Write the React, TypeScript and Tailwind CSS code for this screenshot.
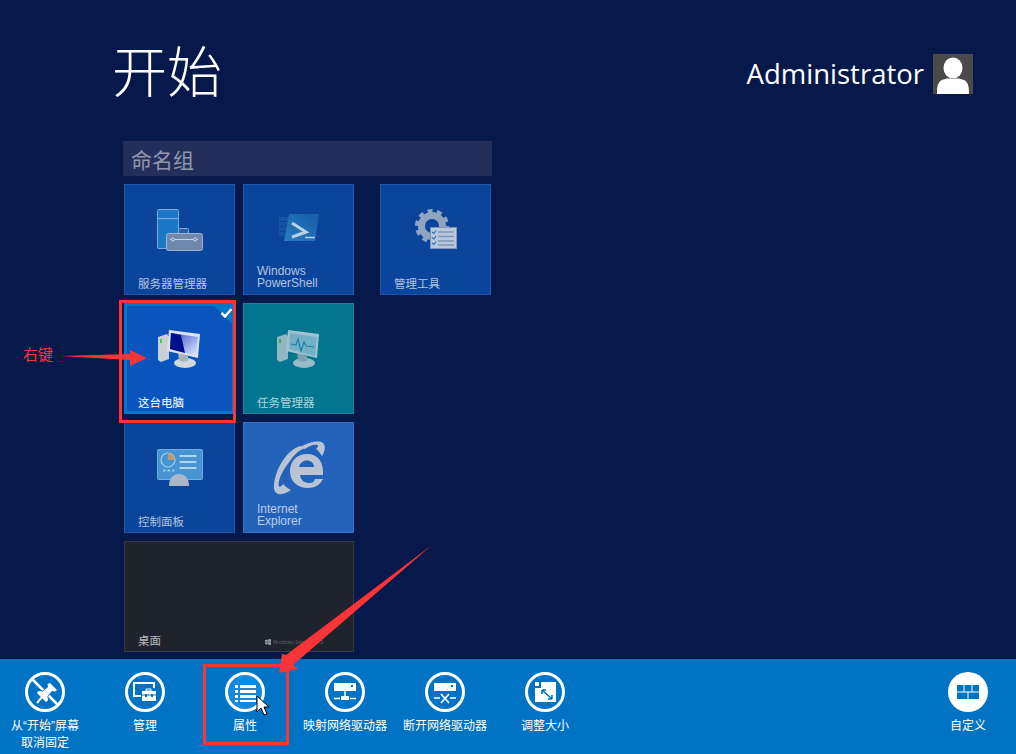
const cjk = "font-['Noto_Sans_CJK_SC','Noto_Sans',sans-serif]"

const Tile = ({ label, bg, children, wide, dim = true }: { label: React.ReactNode; bg: string; children?: React.ReactNode; wide?: boolean; dim?: boolean }) => {
  return (
    <div className={`relative flex h-[111px] flex-col items-center border border-white/10 ${wide ? 'w-[230px]' : 'w-[111px]'} ${bg}`}>
      <div className="flex flex-1 items-center justify-center pb-[20px]">{children}</div>
      <div className={`absolute bottom-[5px] left-[13px] text-[11.5px] leading-[12px] ${dim ? 'text-white/70' : 'text-white'}`}>{label}</div>
    </div>
  )
}

const TwoLines = ({ top, bottom }: { top: string; bottom: string }) => (
  <div className="font-['Liberation_Sans',sans-serif] text-[12px]">
    <div className="h-[12px] leading-[12px]">{top}</div>
    <div className="h-[12px] leading-[12px]">{bottom}</div>
  </div>
)

const ServerIcon = () => (
  <svg width="46" height="42" viewBox="0 0 46 42">
    <rect x="0.5" y="0.5" width="21" height="39" rx="1" fill="#1b78c8" stroke="#7fa8d6" />
    <path d="M1 9.5h20" stroke="#7fa8d6" />
    <rect x="21.5" y="19.5" width="10" height="6" rx="1" fill="#2a5ea8" stroke="#8fa8c8" />
    <rect x="9.5" y="24.5" width="36" height="17" rx="2" fill="#6f88ab" stroke="#9db2cf" />
    <path d="M13 30.5h28" stroke="#c6d3e4" />
    <circle cx="16" cy="30.5" r="1.5" fill="#6f88ab" stroke="#c6d3e4" />
    <circle cx="38" cy="30.5" r="1.5" fill="#6f88ab" stroke="#c6d3e4" />
  </svg>
)

const PowerShellIcon = () => (
  <svg width="40" height="30" viewBox="0 0 40 30" className="-mt-[3px]">
    <defs>
      <linearGradient id="ps" x1="0" y1="1" x2="1" y2="0">
        <stop offset="0" stopColor="#2a7cc0" />
        <stop offset="1" stopColor="#155ea8" />
      </linearGradient>
    </defs>
    <path d="M0 6h10M0 11h8M0 16h8M0 21h6" stroke="#3b7cc0" strokeWidth="4" opacity="0.28" />
    <path d="M10 1h30l-4 27H5z" fill="url(#ps)" />
    <path d="M13 10l14 9-14 5" fill="none" stroke="#b6d2e8" strokeWidth="3" />
    <path d="M26 24.5h10" stroke="#b6d2e8" strokeWidth="1.5" />
  </svg>
)

const GearIcon = () => (
  <svg width="42" height="41" viewBox="0 0 42 41">
    <circle cx="17" cy="17" r="10.5" fill="none" stroke="#8ea4bf" strokeWidth="7" />
    <circle cx="17" cy="17" r="15" fill="none" stroke="#8ea4bf" strokeWidth="4" strokeDasharray="5 4.4" />
    <rect x="15.5" y="18.5" width="26" height="21" fill="#b9c8da" stroke="#7d93b0" />
    <path d="M23 23h16M23 27.5h16M23 32h16M23 36h16" stroke="#7f97b8" strokeWidth="1.5" />
    <path d="M17 23l2 1.5 2-3M17 28.5l2 1.5 2-3M17 34l2 1.5 2-3" stroke="#2e70c4" strokeWidth="1.2" fill="none" />
  </svg>
)

const MonitorIcon = ({ pulse, dim }: { pulse?: boolean; dim?: boolean }) => (
  <svg width="44" height="40" viewBox="0 0 44 40" opacity={dim ? 0.72 : 1}>
    <defs>
      <linearGradient id="scr" x1="0" y1="0" x2="1" y2="1">
        <stop offset="0" stopColor="#2b48c8" />
        <stop offset="1" stopColor="#e8eeff" />
      </linearGradient>
    </defs>
    <path d="M0 8l9-3 2 3v22l-8 3-3-2z" fill="#c8d0d6" />
    <rect x="2" y="10" width="2" height="4" fill="#52c452" />
    <ellipse cx="27" cy="34" rx="11" ry="5" fill="#d2d8dc" />
    <path d="M20 24l10 3v5c-3 1-7 1-9-1z" fill="#aab4bb" />
    <path d="M11 1l31 4-2 24-31-7z" fill="#dde3e8" />
    <path d="M13 4l27 4-2 19-26-7z" fill={pulse ? '#9cc8dc' : 'url(#scr)'} />
    {pulse ? (
      <path d="M14 15l5 1 2-6 3 12 3-9 2 4 8 1" stroke="#2e7fb0" strokeWidth="1.2" fill="none" />
    ) : (
      <path d="M13 4l10 2 4 18-15-4z" fill="#00108a" />
    )}
  </svg>
)

const PanelIcon = () => (
  <svg width="46" height="38" viewBox="0 0 46 38">
    <rect x="0.5" y="0.5" width="45" height="30" rx="1" fill="#4794d4" stroke="#6fb0e0" />
    <circle cx="11" cy="11" r="7" fill="none" stroke="#a4cfec" strokeWidth="1.2" />
    <path d="M11 4a7 7 0 0 1 7 7h-7z" fill="#c29a68" />
    <rect x="22" y="5.5" width="18" height="3" rx="1" fill="#a8d8f2" stroke="#2f6fae" strokeWidth="0.5" />
    <rect x="22" y="11.5" width="18" height="3" rx="1" fill="#a8d8f2" stroke="#2f6fae" strokeWidth="0.5" />
    <rect x="22" y="17.5" width="18" height="3" rx="1" fill="#a8d8f2" stroke="#2f6fae" strokeWidth="0.5" />
    <path d="M6 21.5h2.5M10.5 21.5h2.5M15 21.5h2.5" stroke="#8fd0f0" strokeWidth="2" />
    <path d="M12 37c0-7 3-12 10-12s10 5 10 12z" fill="#a9b8c9" />
  </svg>
)

const IeIcon = () => (
  <svg width="52" height="54" viewBox="0 0 52 54">
    <path
      fill="#b9c3d2"
      fillRule="evenodd"
      d="M34 13C45 13 51 21 50 34H27C28 40 32 42 36 42C39 42 41 41 42 38H50C47 44 42 47 35 47C24 47 17 40 17 30C17 20 24 13 34 13ZM26 26H41C41 22 38 19.5 34 19.5C30 19.5 27 22 26 26Z"
    />
    <path fill="#b9c3d2" d="M27 5C15 9 4 24 1 43C0 50 3 54 9 53C12 52.5 15 51 18 49C14 47 12 45 10 43C8 46 6 47 5.5 44C6 36 10 29 17 20C20 15 25 10 32 7Z" />
    <path fill="#b9c3d2" d="M27 6C36 1 46 -1 50 2C53 5 52 10 49 15C47 12 45 9 43 8C45 6 46 4 44 4C41 3 36 5 32 8Z" />
  </svg>
)

const Glyph = ({ children }: { children: React.ReactNode }) => (
  <svg width="24" height="24" viewBox="0 0 24 24" className="text-white">
    {children}
  </svg>
)

const BarItem = ({ label, icon, filled, hovered }: { label: React.ReactNode; icon: React.ReactNode; filled?: boolean; hovered?: boolean }) => {
  return (
    <div className="flex w-[100px] flex-col items-center pt-[13px]">
      <div className={`flex h-[40px] w-[40px] items-center justify-center rounded-full border-white ${filled ? 'bg-white' : 'border-[3px]'} ${hovered ? 'bg-[#1488dc]' : ''}`}>
        {icon}
      </div>
      <div className="mt-[5px] text-center text-[12px] leading-[16px] whitespace-nowrap text-white">{label}</div>
    </div>
  )
}

const App = () => {
  return (
    <div className={`relative flex h-[754px] w-[1016px] flex-col overflow-hidden bg-[#07194a] ${cjk}`}>
      <div className="flex h-[141px] items-start justify-between pr-[43px] pl-[112px]">
        <h1 className="mt-[30px] text-[55px] leading-[76px] font-light text-white">开始</h1>
        <div className="mt-[54px] flex items-center gap-[9px]">
          <span className="font-['Open_Sans',sans-serif] text-[27.5px] leading-[40px] text-white">Administrator</span>
          <div className="h-[40px] w-[40px] bg-[#4a4a4a]">
            <svg width="40" height="40" viewBox="0 0 40 40">
              <ellipse cx="20" cy="14" rx="9.5" ry="10.5" fill="#fff" />
              <path d="M4 40c0-8 1-12 5-14 3-1 6-2 11-1 5-1 8 0 11 1 4 2 5 6 5 14z" fill="#fff" />
            </svg>
          </div>
        </div>
      </div>

      <div className="flex-1 pl-[123px]">
        <div className="flex h-[35px] w-[369px] items-center bg-[#232f5a] pl-[8px] text-[21px] leading-[30px] text-white/50">命名组</div>
        <div className="mt-[8px] ml-[1px] flex gap-[26px]">
          <div className="grid w-[230px] grid-cols-2 gap-[8px]">
            <Tile label="服务器管理器" bg="bg-[#0a449b]">
              <ServerIcon />
            </Tile>
            <Tile label={<TwoLines top="Windows" bottom="PowerShell" />} bg="bg-[#0a449b]">
              <PowerShellIcon />
            </Tile>
            <Tile label="这台电脑" bg="bg-[#0a55bd]" dim={false}>
              <MonitorIcon />
            </Tile>
            <Tile label="任务管理器" bg="bg-[#02758f]">
              <MonitorIcon pulse dim />
            </Tile>
            <Tile label="控制面板" bg="bg-[#0a449b]">
              <PanelIcon />
            </Tile>
            <Tile label={<TwoLines top="Internet" bottom="Explorer" />} bg="bg-[#2362bb]">
              <IeIcon />
            </Tile>
            <div className="col-span-2">
              <Tile label="桌面" bg="bg-[#1f232d]" wide>
                <div className="absolute right-[30px] bottom-[6px] flex items-center gap-[2px] text-[5px] leading-[6px] text-white/30">
                  <svg width="6" height="6" viewBox="0 0 6 6">
                    <path d="M0 1l2.7-.5v2.3H0zM3 .4L6 0v2.8H3zM0 3.2h2.7v2.3L0 5zM3 3.2h3V6l-3-.4z" fill="#9aa0a8" />
                  </svg>
                  <span className="font-['Open_Sans',sans-serif] whitespace-nowrap">Windows Server 2012</span>
                </div>
              </Tile>
            </div>
          </div>
          <div className="w-[111px]">
            <Tile label="管理工具" bg="bg-[#0a449b]">
              <GearIcon />
            </Tile>
          </div>
        </div>
      </div>

      <div className="flex h-[95px] items-start justify-between bg-[#0073c4]">
        <div className="-ml-[5px] flex">
          <BarItem
            label={
              <>
                从<span className="font-['Liberation_Sans',sans-serif]">“</span>开始<span className="font-['Liberation_Sans',sans-serif]">”</span>屏幕
                <br />
                取消固定
              </>
            }
            icon={
              <svg width="34" height="34" viewBox="0 0 34 34">
                <path d="M4 4l26 26" stroke="#fff" strokeWidth="2.5" />
                <path d="M22 8l7 7-2 1.5-3-.5-4.5 5 .5 4.5-2 1.5-9-9 1.5-2 4.5.5 5-4.5-.5-3z" fill="#fff" stroke="#0073c4" strokeWidth="1.5" paintOrder="stroke" />
                <path d="M9 28l5-6" stroke="#fff" strokeWidth="2" />
              </svg>
            }
          />
          <BarItem
            label="管理"
            icon={
              <Glyph>
                <path d="M8 16H1V3h20v5" fill="none" stroke="currentColor" strokeWidth="2" />
                <path d="M13 9h5v2h-5z" fill="none" stroke="currentColor" />
                <rect x="9" y="11" width="14" height="10" fill="currentColor" />
                <path d="M9 15h14" stroke="#0073c4" />
                <path d="M12 14h2v3h-2zM18 14h2v3h-2z" fill="#0073c4" />
              </Glyph>
            }
          />
          <BarItem
            label="属性"
            hovered
            icon={
              <Glyph>
                <path d="M7 5h16v3H7zM7 10h16v3H7zM7 15h16v3H7zM7 20h16v2H7z" fill="currentColor" />
                <path d="M2 5h3v3H2zM2 10h3v3H2zM2 15h3v3H2zM2 20h3v2H2z" fill="currentColor" />
              </Glyph>
            }
          />
          <BarItem
            label="映射网络驱动器"
            icon={
              <Glyph>
                <rect x="1" y="3" width="22" height="8" fill="currentColor" />
                <rect x="18" y="5" width="2" height="2" fill="#0073c4" />
                <path d="M12 11v7M1 18.5h6M17 18.5h6" stroke="currentColor" strokeWidth="1.5" />
                <rect x="8" y="16" width="8" height="4" fill="currentColor" />
              </Glyph>
            }
          />
          <BarItem
            label="断开网络驱动器"
            icon={
              <Glyph>
                <rect x="1" y="3" width="22" height="8" fill="currentColor" />
                <rect x="18" y="5" width="2" height="2" fill="#0073c4" />
                <path d="M1 18h6M17 18h6M8 14l8 9M16 14l-8 9" stroke="currentColor" strokeWidth="1.7" />
              </Glyph>
            }
          />
          <BarItem
            label="调整大小"
            icon={
              <Glyph>
                <path d="M8 2h15v20H2V8h6z" fill="currentColor" />
                <path d="M2 2h4v4H2z" fill="currentColor" />
                <path d="M9 10l10 9M9 10h4M9 10v4M19 19h-4M19 19v-4" stroke="#0073c4" strokeWidth="1.6" fill="none" />
              </Glyph>
            }
          />
        </div>
        <div className="mr-[-2px]">
          <BarItem
            label="自定义"
            filled
            icon={
              <svg width="22" height="14" viewBox="0 0 22 14">
                <path d="M0 0h6.5v6.5H0zM7.5 0h7v6.5h-7zM15.5 0H22v6.5h-6.5zM0 7.5h10.5V14H0zM11.5 7.5H22V14H11.5z" fill="#0073c4" />
              </svg>
            }
          />
        </div>
      </div>

      {/* selected tile: lighter frame and corner check */}
      <div className="absolute top-[303px] left-[124px] h-[111px] w-[111px] border-[3px] border-[#0477c8]" />
      <div className="absolute top-[303px] left-[211px] h-0 w-0 border-t-[24px] border-l-[24px] border-t-[#0477c8] border-l-transparent" />
      <svg className="absolute top-[307px] left-[220px]" width="13" height="12" viewBox="0 0 13 12">
        <path d="M1.5 6l3.5 3.5L11.5 2" fill="none" stroke="#fff" strokeWidth="2.5" />
      </svg>

      {/* red annotations drawn on top of the screenshot */}
      <span className="absolute top-[344px] left-[23px] text-[15px] leading-[20px] text-[#fb3438]">右键</span>
      <div className="absolute top-[300px] left-[119px] h-[123px] w-[117px] border-[3px] border-[#fb3438]" />
      <div className="absolute top-[664px] left-[203px] h-[81px] w-[86px] border-[3px] border-[#fb3438]" />
      <svg className="pointer-events-none absolute top-0 left-0" width="1016" height="754" viewBox="0 0 1016 754">
        <path d="M60 356l70-2v-4l17 8-17 8v-6z" fill="#fb3438" />
        <path d="M432 545L286 655l-4-1-3 19 19-4-5-4z" fill="#fb3438" />
      </svg>
      <svg className="absolute top-[695px] left-[256px]" width="14" height="22" viewBox="0 0 14 22">
        <path d="M1 1v16l4-4 3 7 3-1-3-7h5z" fill="#fff" stroke="#000" />
      </svg>
    </div>
  )
}

export default App
